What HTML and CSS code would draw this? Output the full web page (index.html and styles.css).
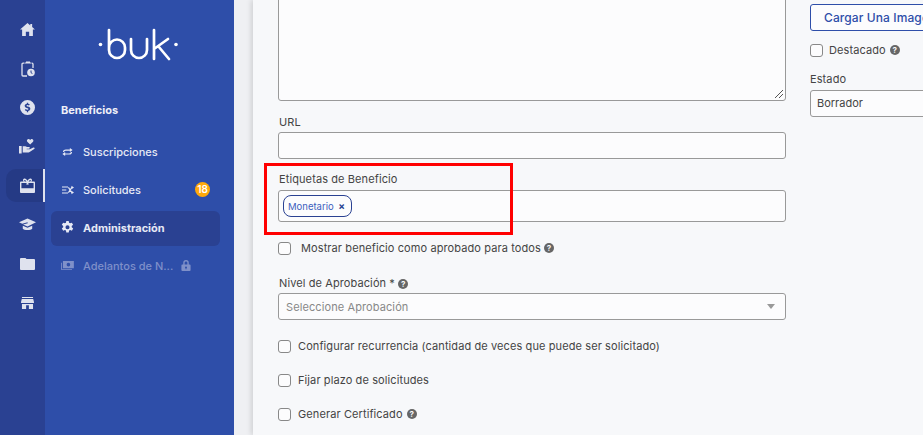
FILE: index.html
```html
<!DOCTYPE html>
<html lang="es">
<head>
<meta charset="utf-8">
<title>Beneficios</title>
<link rel="stylesheet" href="styles.css">
</head>
<body>
<div class="app">
  <nav class="rail">
    <a class="rail-item"><svg viewBox="0 0 16 14" width="15" height="13"><path d="M8 0 0 7h2.200v7h4V9.500h3.600V14h4V7H16l-3-2.600V1h-2v1.700z"/></svg></a>
    <a class="rail-item"><svg viewBox="0 0 14 16" width="14" height="16"><path d="M4 1.500h1V.5h4v1h1v1H4z"/><path fill="none" stroke="currentColor" stroke-width="1.300" d="M3.500 2.200H2a1 1 0 0 0-1 1V14a1 1 0 0 0 1 1h4M10.500 2.200H11a1 1 0 0 1 1 1V7"/><circle cx="10" cy="11.500" r="3.800"/><path stroke="#2a4192" fill="none" d="M10 9.500v2.200l1.400.8"/></svg></a>
    <a class="rail-item"><svg viewBox="0 0 16 16" width="15" height="15"><path fill-rule="evenodd" d="M8 0a8 8 0 1 1 0 16A8 8 0 0 1 8 0zM7.300 2.800v1.100C6 4.100 5 5 5 6.200c0 1.400 1.100 2 2.400 2.300 1 .3 1.600.5 1.600 1.100 0 .5-.5.8-1.100.8-.7 0-1.300-.3-1.800-.8l-1 1c.5.600 1.300 1 2.200 1.100v1.400h1.400v-1.400c1.300-.2 2.300-1 2.300-2.300 0-1.500-1.100-2.100-2.500-2.400-1-.2-1.500-.5-1.500-1 0-.4.400-.8 1-.8s1.100.3 1.500.7l1-1c-.5-.6-1.100-.9-1.800-1V2.800z"/></svg></a>
    <a class="rail-item rail-hand"><svg viewBox="0 0 16 15" width="17" height="16"><path d="M10.500 6.200 7.800 3.500C6.600 2.200 8.500 0 10 1.300l.5.500.5-.5c1.500-1.300 3.400.9 2.200 2.200z"/><path d="M0 7.500h2.500v7H0zM3.500 7.700H6l1.600.8h1.900c.9 0 .9 1.500 0 1.500H7.200v.5h3l3.300-1.500c1-.4 1.800.8.800 1.400l-4.300 2.800c-.3.200-.6.300-1 .3H3.500z"/></svg></a>
    <a class="rail-item active"><svg viewBox="0 0 16 16" width="15" height="15"><path fill-rule="evenodd" d="M4.500.5C6 .2 7.200 1.500 8 2.800 8.800 1.500 10 .2 11.500.5c1.500.4 1.700 2.300.6 3.200H15a1 1 0 0 1 1 1V15a1 1 0 0 1-1 1H1a1 1 0 0 1-1-1V4.700a1 1 0 0 1 1-1h2.900C2.800 2.800 3 .9 4.500.5zM5 2c-.8 0-.8 1.500.3 1.700h1.500C6.400 2.900 5.800 2 5 2zm6 0c-.8 0-1.400.9-1.800 1.700h1.500C11.800 3.500 11.800 2 11 2zM1.500 5.200v5.800h13V5.200H9v2.300L8 7l-1 .5V5.200z"/></svg></a>
    <a class="rail-item"><svg viewBox="0 0 18 14" width="17" height="14"><path d="M9 0 0 4l3.500 1.600 5.500-1.500.3 1-5 1.500L9 8.500 18 4z"/><path d="M4 7.800V11c1 1.800 9 1.800 10 0V7.800L9 10z"/></svg></a>
    <a class="rail-item"><svg viewBox="0 0 15 12" width="15" height="12"><path d="M0 1a1 1 0 0 1 1-1h4.500l1 1H14a1 1 0 0 1 1 1v9a1 1 0 0 1-1 1H1a1 1 0 0 1-1-1z"/></svg></a>
    <a class="rail-item"><svg viewBox="0 0 14 13" width="13" height="12"><path fill-rule="evenodd" d="M1 0h12v1.200H1zM.8 2.200h12.400L14 5.500v1H0v-1zM1 7.500h12V13H8.500V9h-3v4H1z"/></svg></a>
  </nav>
  <aside class="menu">
    <div class="logo">
      <svg viewBox="0 0 80 34" width="80" height="34" fill="none" stroke="#fff" stroke-width="2.700" stroke-linecap="round" stroke-linejoin="round" role="img" aria-label="buk">
        <path d="M11 2V22a8 8 0 0 0 16 0v-2.500a8 8 0 0 0-16 0"/>
        <path d="M33 11V22a8 8 0 0 0 16 0V11"/>
        <path d="M56 2V31M56 21 70 11M60.500 18.500 71 31"/>
        <circle cx="2.500" cy="16.500" r="1.800" fill="#fff" stroke="none"/>
        <circle cx="78" cy="16.500" r="1.800" fill="#fff" stroke="none"/>
      </svg>
    </div>
    <h2 class="menu-title">Beneficios</h2>
    <ul class="menu-list">
      <li class="menu-item"><svg viewBox="0 0 14 10" width="11" height="8"><path fill="none" stroke="currentColor" stroke-width="1.500" d="M2 5c0-1.800 1.500-2.500 3-2.500h6M12 5c0 1.800-1.500 2.500-3 2.500H3"/><path d="M10 0l3.500 2.500L10 5zM4 5 .5 7.500 4 10z"/></svg><span>Suscripciones</span></li>
      <li class="menu-item"><svg viewBox="0 0 14 11" width="12" height="10"><path fill="none" stroke="currentColor" stroke-width="1.300" d="M0 2h7M0 5.500h5M0 9h7M7.500 8.500 11.500 2.500M7.500 2.500l4 6"/><path d="M11 .5 14 2.500 11 4.500zM11 6.500 14 8.500 11 10.500z"/></svg><span>Solicitudes</span><b class="badge">18</b></li>
      <li class="menu-item current"><svg viewBox="0 0 16 16" width="13" height="13"><path fill-rule="evenodd" d="M6.500 0h3l.4 2.200 1.300.7L13.300 2l1.600 2.700L13.200 6.200v1.500l1.800 1.600-1.600 2.700-2.100-.9-1.300.7-.5 2.200h-3l-.4-2.200-1.300-.7-2.100.9L1 9.300l1.700-1.500V6.200L1 4.700 2.700 2l2.100.9 1.300-.7zM8 5.300a2.500 2.500 0 1 0 0 5 2.500 2.500 0 0 0 0-5z"/></svg><span>Administración</span></li>
      <li class="menu-item locked"><svg viewBox="0 0 14 11" width="13" height="10"><path fill-rule="evenodd" d="M2 0h12v8H2zm6 2a2 2 0 1 0 0 4 2 2 0 0 0 0-4zM0 2h1v7h11v1H1a1 1 0 0 1-1-1z"/></svg><span>Adelantos de N...</span><svg class="lock" viewBox="0 0 10 12" width="10" height="11"><path fill-rule="evenodd" d="M2 5V3a3 3 0 0 1 6 0v2h1a1 1 0 0 1 1 1v5a1 1 0 0 1-1 1H1a1 1 0 0 1-1-1V6a1 1 0 0 1 1-1zm1.500 0h3V3a1.500 1.500 0 0 0-3 0zM5 7a1 1 0 0 0-.5 1.900V10h1V8.900A1 1 0 0 0 5 7z"/></svg></li>
    </ul>
  </aside>
  <main class="page">
    <div class="panel">
      <form class="col-main">
        <div class="textarea"><svg class="grip" viewBox="0 0 10 10" width="10" height="10"><path d="M1 9 9 1M5 9 9 5" fill="none" stroke="#555" stroke-width="1"/></svg></div>
        <label class="label label-url">URL</label>
        <div class="input"></div>
        <label class="label label-tags">Etiquetas de Beneficio</label>
        <div class="input tags"><span class="tag">Monetario <i class="tag-x">×</i></span></div>
        <div class="check check-show"><span class="box"></span><span class="check-text wide">Mostrar beneficio como aprobado para todos</span><span class="help">?</span></div>
        <label class="label label-level">Nivel de Aprobación * <span class="help inline">?</span></label>
        <div class="input select"><span class="placeholder">Seleccione Aprobación</span><span class="caret"></span></div>
        <div class="check check-rec"><span class="box"></span><span class="check-text">Configurar recurrencia (cantidad de veces que puede ser solicitado)</span></div>
        <div class="check check-next"><span class="box"></span><span class="check-text">Fijar plazo de solicitudes</span></div>
        <div class="check check-next"><span class="box"></span><span class="check-text">Generar Certificado</span><span class="help">?</span></div>
      </form>
      <div class="col-side">
        <button class="upload" type="button">Cargar Una Imagen</button>
        <div class="check check-featured"><span class="box"></span><span class="check-text">Destacado</span><span class="help">?</span></div>
        <label class="label label-state">Estado</label>
        <div class="input state">Borrador</div>
      </div>
    </div>
  </main>
</div>
<div class="highlight"></div>
</body>
</html>
```
FILE: styles.css
```css
* { box-sizing: border-box; }
html, body { margin: 0; height: 100%; overflow: hidden; }
body { font-family: Inter, "Liberation Sans", sans-serif; font-size: 11px; color: #444; background: #eff0f3; }
.app { display: flex; width: 923px; height: 435px; }

.rail { width: 45px; flex: none; background: #2a4192; display: flex; flex-direction: column; gap: 6px; padding-top: 13px; }
.rail-item { height: 33px; width: 39px; margin-left: 6px; flex: none; display: flex; align-items: center; justify-content: center; padding-left: 4px; color: #dfe2ee; }
.rail-item svg { fill: currentColor; }
.rail-hand { padding-bottom: 2px; }
.rail-item.active { background: #253a85; border-radius: 10px 0 0 10px; border-right: 2px solid #dfe2ee; padding-left: 5px; }

.menu { width: 189px; flex: none; background: #2e4ea9; color: #e9ecf7; padding: 0 14px 0 6px; }
.logo { height: 62px; padding: 28px 0 0 47px; }
.logo svg { display: block; }
.menu-title { margin: 40px 0 0 10px; font-size: 11px; font-weight: 700; line-height: 16px; color: #eef0f8; }
.menu-list { list-style: none; margin: 17px 0 0; padding: 0; }
.menu-item { display: flex; align-items: center; height: 35px; margin-bottom: 3px; padding: 0 0 2px 11px; font-size: 11px; font-weight: 500; color: #e6e9f5; border-radius: 6px; position: relative; }
.menu-item svg { fill: currentColor; flex: none; }
.menu-item > span { position: absolute; left: 32px; }
.menu-item.current { background: #2a4192; font-weight: 700; padding-left: 10px; }
.menu-item.locked { color: #7f90c9; padding-left: 10px; }
.menu-item .lock { position: absolute; left: 130px; top: 11px; }
.badge { position: absolute; left: 144px; top: 9px; width: 15px; height: 15px; border-radius: 50%; background: #ffa90a; color: #fff; font-size: 10px; font-weight: 600; text-align: center; line-height: 15px; }

.page { flex: 1; padding-left: 19px; min-width: 0; }
.panel { background: #f7f8fa; height: 100%; display: flex; padding-left: 25px; box-shadow: -2px 0 5px rgba(0, 0, 0, .13); }
.col-main { width: 508px; flex: none; }
.col-side { width: 120px; margin-left: 24px; flex: none; padding-top: 4px; white-space: nowrap; }

.label { display: block; font-size: 11px; line-height: 16px; color: #444; letter-spacing: .1px; padding-left: 1px; }
.help { display: inline-flex; width: 10px; height: 10px; margin-left: 4px; border-radius: 50%; background: #666; color: #f7f8fa; font-size: 8px; font-weight: 700; line-height: 10px; justify-content: center; flex: none; }
.help.inline { margin-left: 0; }
.textarea { position: relative; height: 102px; margin-top: -1px; background: #fcfcfd; border: 1px solid #999; border-radius: 0 0 3px 3px; }
.grip { position: absolute; right: 1px; bottom: 1px; }
.input { height: 27px; background: #fcfcfd; border: 1px solid #999; border-radius: 3px; }
.label-url { margin-top: 13px; margin-bottom: 2px; }
.label-tags { margin-top: 12px; margin-bottom: 3px; }
.tags { height: 32px; padding: 4px; }
.tag { display: inline-flex; align-items: center; height: 22px; padding: 0 6px 0 4px; border: 1px solid #2a4192; border-radius: 8px; color: #3d5fbd; font-size: 9.500px; white-space: pre; }
.tag-x { font-style: normal; font-weight: 700; font-size: 10px; margin-left: 2px; color: #2a4192; }
.check { display: flex; align-items: center; height: 16px; }
.box { width: 13px; height: 13px; flex: none; background: #fcfcfd; border: 1px solid #888; border-radius: 3px; }
.check-text { margin-left: 6px; font-size: 11px; color: #444; letter-spacing: .1px; }
.col-main .check-text { margin-left: 7px; }
.col-main .check-text.wide { margin-left: 10px; }
.check-show { margin-top: 18px; }
.check-show .help { margin-left: 3px; }
.label-level { margin-top: 19px; margin-bottom: 2px; }
.select { display: flex; align-items: center; justify-content: space-between; padding: 0 8px 0 7px; }
.placeholder { color: #888; letter-spacing: .1px; }
.caret { border: 4px solid transparent; border-top: 5px solid #999; border-bottom: 0; margin-right: 2px; }
.check-rec { margin-top: 18px; }
.check-next { margin-top: 18px; }

.upload { display: block; width: 130px; height: 27px; padding: 0 0 0 13px; text-align: left; background: #fcfcfd; border: 1px solid #2e4ea9; border-radius: 3px; color: #2e4ea9; font: 500 12px/25px Inter, "Liberation Sans", sans-serif; letter-spacing: .1px; white-space: nowrap; overflow: hidden; }
.check-featured { margin-top: 11px; }
.label-state { margin-top: 13px; margin-bottom: 3px; padding-left: 0; }
.state { width: 130px; line-height: 25px; padding-left: 6px; color: #444; }

.highlight { position: absolute; left: 264px; top: 163px; width: 249px; height: 72px; border: 3px solid #f00; }
```
